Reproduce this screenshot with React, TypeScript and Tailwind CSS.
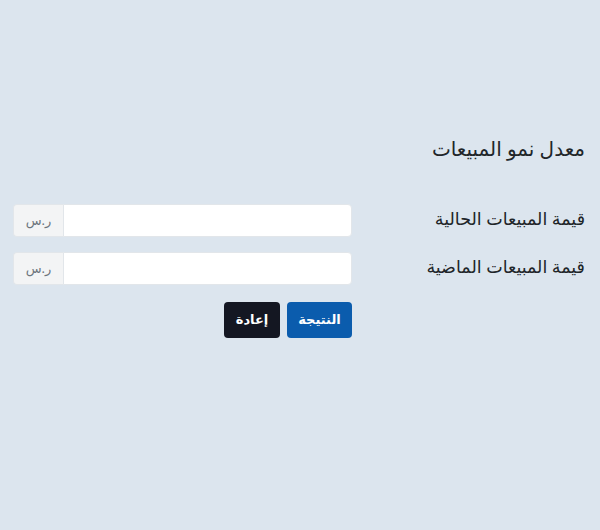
export default function App() {
  const fields = ['قيمة المبيعات الحالية', 'قيمة المبيعات الماضية'];

  return (
    <div
      dir="rtl"
      className="min-h-screen bg-[#dce5ee] pr-[15px] pt-[136px] text-[#212529]"
      style={{ fontFamily: '"Noto Sans", "DejaVu Sans", sans-serif' }}
    >
      <h1 className="mb-[42px] text-[20px] leading-[26px]">معدل نمو المبيعات</h1>

      <div className="flex flex-col gap-[15px]">
        {fields.map((label) => (
          <div key={label} className="flex items-center">
            <label className="w-[233px] pb-[6px] text-[17.5px] leading-[24px]">{label}</label>
            <div className="flex h-[33px] w-[339px]">
              <input
                type="text"
                className="flex-1 rounded-r-[4px] border border-[#e2e6ea] bg-white px-3 outline-none"
              />
              <span className="flex w-[50px] items-center justify-center rounded-l-[4px] border border-r-0 border-[#e2e6ea] bg-[#f3f4f5] text-[13px] text-[#6c757d]">
                ر.س
              </span>
            </div>
          </div>
        ))}
      </div>

      <div className="mt-[17px] flex gap-[7px] pr-[233px]">
        <button className="h-[36px] w-[65px] rounded-[4px] bg-[#0b5cad] text-[13px] font-bold text-white">
          النتيجة
        </button>
        <button className="h-[36px] w-[56px] rounded-[4px] bg-[#141722] text-[13px] font-bold text-white">
          إعادة
        </button>
      </div>
    </div>
  );
}
